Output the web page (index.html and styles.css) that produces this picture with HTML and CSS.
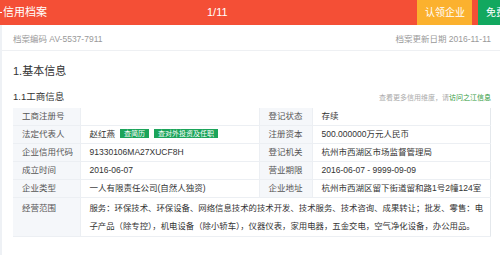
FILE: index.html
```html
<!DOCTYPE html>
<html>
<head>
    <meta charset="utf-8">
    <title>信用档案</title>
<link rel="stylesheet" href="styles.css">
</head>

<body>
    <header class="topbar">
        <span class="back"></span>
        <h1 class="title">信用档案</h1>
        <span class="pager">1/11</span>
        <a class="btn btn-claim" href="#">认领企业</a>
        <a class="btn btn-free" href="#">免费咨询</a>
    </header>

    <div class="panel">
        <div class="meta">
            <span>档案编码 AV-5537-7911</span>
            <span>档案更新日期 2016-11-11</span>
        </div>

        <h2 class="sect-title">1.基本信息</h2>

        <div class="subhead">
            <h3>1.1工商信息</h3>
            <p class="more">查看更多信用维度，请<a href="#">访问之江信息</a></p>
        </div>

        <table class="info">
            <colgroup>
                <col class="c-label">
                <col class="c-value">
                <col class="c-label2">
                <col>
            </colgroup>
            <tr>
                <th>工商注册号</th>
                <td></td>
                <th>登记状态</th>
                <td>存续</td>
            </tr>
            <tr>
                <th>法定代表人</th>
                <td>赵红燕<span class="tag">查简历</span><span class="tag">查对外投资及任职</span></td>
                <th>注册资本</th>
                <td>500.000000万元人民币</td>
            </tr>
            <tr>
                <th>企业信用代码</th>
                <td>91330106MA27XUCF8H</td>
                <th>登记机关</th>
                <td>杭州市西湖区市场监督管理局</td>
            </tr>
            <tr>
                <th>成立时间</th>
                <td>2016-06-07</td>
                <th>营业期限</th>
                <td>2016-06-07 - 9999-09-09</td>
            </tr>
            <tr>
                <th>企业类型</th>
                <td>一人有限责任公司(自然人独资)</td>
                <th>企业地址</th>
                <td>杭州市西湖区留下街道留和路1号2幢124室</td>
            </tr>
            <tr>
                <th>经营范围</th>
                <td colspan="3" class="scope">服务：环保技术、环保设备、网络信息技术的技术开发、技术服务、技术咨询、成果转让；批发、零售：电子产品（除专控），机电设备（除小轿车），仪器仪表，家用电器，五金交电，空气净化设备，办公用品。</td>
            </tr>
        </table>
    </div>
</body>
</html>
```

FILE: styles.css
```css
html, body {
    margin: 0;
    padding: 0;
}

body {
    width: 500px;
    height: 255px;
    overflow: hidden;
    background: #eef1f5;
    font-family: "Liberation Sans", "Noto Sans CJK SC", sans-serif;
    color: #333;
}

/* top bar */
.topbar {
    display: flex;
    align-items: stretch;
    height: 25px;
    background: #f44f36;
    color: #fff;
    overflow: hidden;
}

.topbar > * {
    flex-shrink: 0;
}

.back {
    width: 2px;
    height: 1px;
    margin-top: 12px;
    background: #fff;
}

.title {
    width: 204px;
    margin: 0;
    padding-left: 1px;
    font-size: 11px;
    font-weight: normal;
    line-height: 25px;
}

.pager {
    width: 210px;
    font-size: 11px;
    line-height: 25px;
}

.btn {
    display: block;
    padding: 0 9px 0 8px;
    font-size: 10px;
    line-height: 25px;
    color: #fff;
    text-decoration: none;
    white-space: nowrap;
}

.btn-claim {
    width: 38px;
    background: #fbb12e;
}

.btn-free {
    margin-left: 6px;
    background: #12a85f;
}

/* content */
.panel {
    margin-left: 2px;
    height: 230px;
    padding: 0 9px 0 11px;
    background: #fff;
}

.meta {
    display: flex;
    justify-content: space-between;
    margin: 0 -9px 0 -11px;
    padding: 3px 9px 0 11px;
    line-height: 22px;
    font-size: 8.5px;
    color: #999;
    border-bottom: 1px solid #eef0f3;
}

.sect-title {
    margin: 12px 0 0;
    font-size: 11px;
    font-weight: normal;
    line-height: 16px;
}

.subhead {
    display: flex;
    justify-content: space-between;
    align-items: center;
    margin-top: 9px;
    height: 16px;
}

.subhead h3 {
    margin: 0;
    font-size: 9.5px;
    font-weight: normal;
}

.more {
    margin: 2px 0 0;
    font-size: 7px;
    color: #aaa;
}

.more a {
    color: #2f9a3c;
    text-decoration: none;
}

.info {
    width: 100%;
    margin-top: 4px;
    border-collapse: collapse;
    table-layout: fixed;
    font-size: 8.5px;
}

.c-label {
    width: 67px;
}

.c-value {
    width: 179px;
}

.c-label2 {
    width: 53px;
}

.info th, .info td {
    height: 17px;
    padding: 0 0 0 9px;
    line-height: 17px;
    border: 1px solid #eceff3;
    text-align: left;
    font-weight: normal;
    white-space: nowrap;
}

.info th {
    background: #f5f7fa;
    color: #555;
}

.info th:first-child {
    border-left: none;
}

.info tr:first-child th, .info tr:first-child td {
    border-top: none;
}

.info td:last-child {
    border-right-color: #e4e8ec;
}

.info .scope {
    white-space: normal;
    padding: 1px 0 1px 9px;
    font-size: 8.4px;
    line-height: 18px;
    vertical-align: top;
}

.info tr:last-child th {
    vertical-align: top;
    padding-top: 1px;
    line-height: 18px;
}

.tag {
    display: inline-block;
    margin-left: 5px;
    padding: 0 4px;
    font-size: 7px;
    line-height: 9px;
    color: #fff;
    background: #1ba45a;
    vertical-align: 1px;
}
```
